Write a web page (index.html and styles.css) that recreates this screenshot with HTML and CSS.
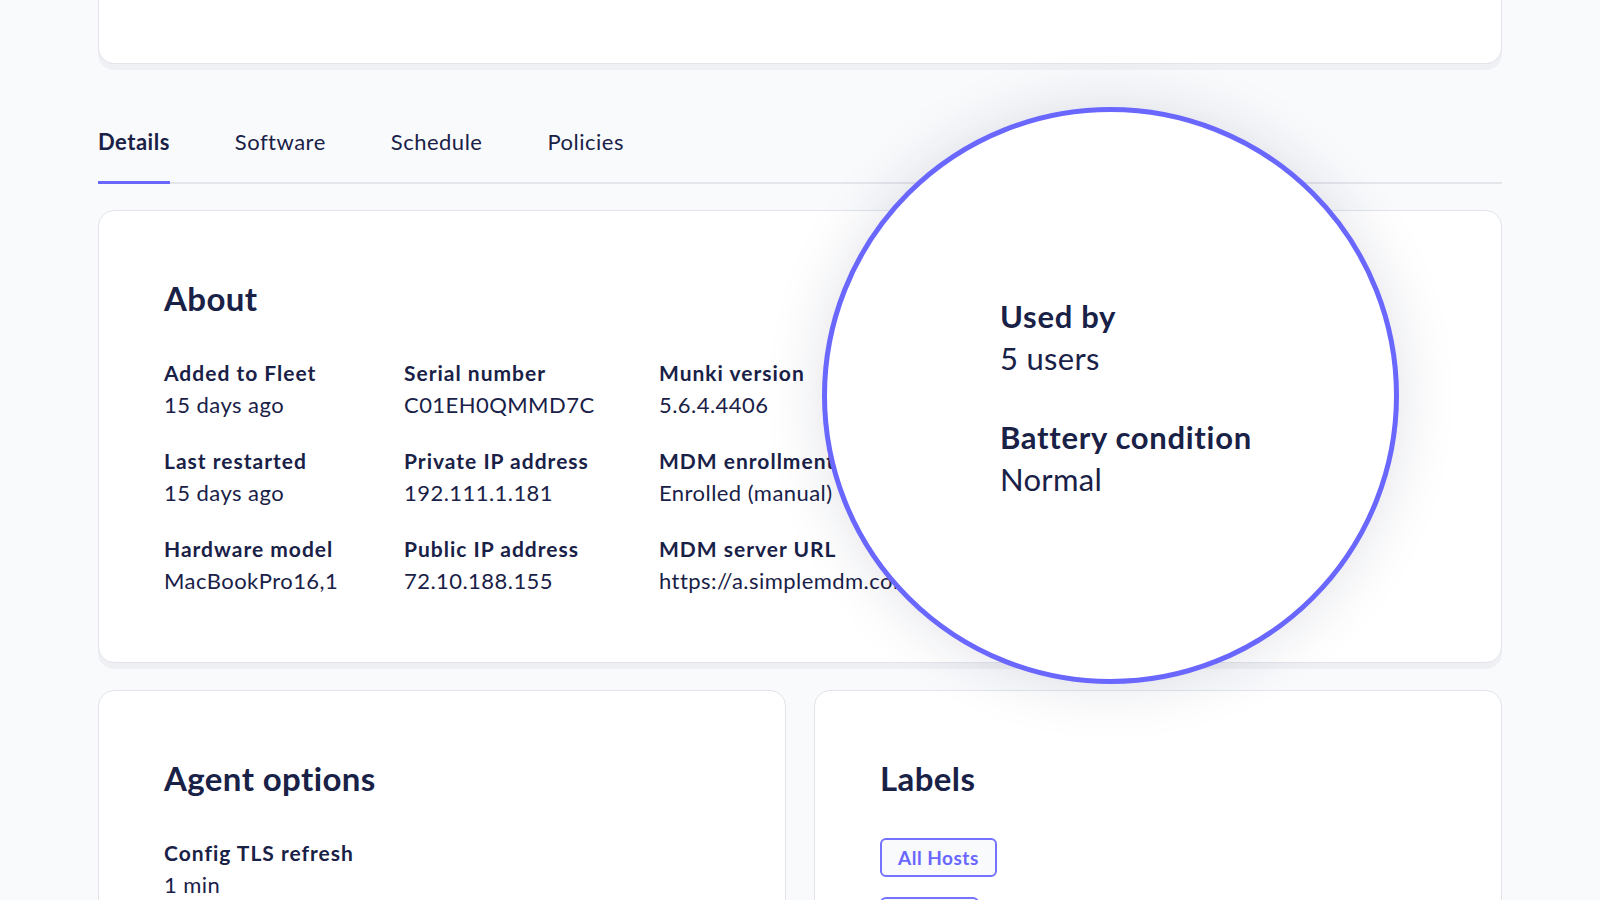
FILE: index.html
```html
<!DOCTYPE html>
<html lang="en">
<head>
<meta charset="utf-8">
<title>Host details</title>
<link rel="stylesheet" href="styles.css">
</head>
<body>
<div class="page">
  <div class="top-card"></div>

  <nav class="tabs">
    <a class="tab active">Details</a>
    <a class="tab">Software</a>
    <a class="tab">Schedule</a>
    <a class="tab">Policies</a>
  </nav>

  <section class="card about">
    <h2 class="card-title">About</h2>
    <div class="info-grid">
      <div class="info"><div class="label">Added to Fleet</div><div class="value">15 days ago</div></div>
      <div class="info"><div class="label">Serial number</div><div class="value">C01EH0QMMD7C</div></div>
      <div class="info"><div class="label">Munki version</div><div class="value">5.6.4.4406</div></div>

      <div class="info"><div class="label">Last restarted</div><div class="value">15 days ago</div></div>
      <div class="info"><div class="label">Private IP address</div><div class="value">192.111.1.181</div></div>
      <div class="info"><div class="label">MDM enrollment</div><div class="value">Enrolled (manual)</div></div>

      <div class="info"><div class="label">Hardware model</div><div class="value">MacBookPro16,1</div></div>
      <div class="info"><div class="label">Public IP address</div><div class="value">72.10.188.155</div></div>
      <div class="info"><div class="label">MDM server URL</div><div class="value">https://a.simplemdm.com</div></div>
    </div>
  </section>

  <div class="bottom-row">
    <section class="card">
      <h2 class="card-title">Agent options</h2>
      <div class="info"><div class="label">Config TLS refresh</div><div class="value">1 min</div></div>
    </section>
    <section class="card">
      <h2 class="card-title">Labels</h2>
      <div class="pills">
        <span class="pill">All Hosts</span>
        <span class="pill">macOS</span>
      </div>
    </section>
  </div>

  <div class="magnifier">
    <div class="mag-item">
      <div class="mag-label">Used by</div>
      <div class="mag-value">5 users</div>
    </div>
    <div class="mag-item">
      <div class="mag-label">Battery condition</div>
      <div class="mag-value">Normal</div>
    </div>
  </div>
</div>
</body>
</html>
```

FILE: styles.css
```css
* { box-sizing: border-box; }

html, body {
  margin: 0;
  padding: 0;
  background: #f9fafc;
  height: 900px;
  overflow: hidden;
}

body {
  font-family: "Lato", "Noto Sans", sans-serif;
  color: #192147;
}

.page {
  position: relative;
  width: 1404px;
  margin: 0 auto;
}

.top-card {
  height: 64px;
  background: #fff;
  border: 1px solid #e2e4ea;
  border-top: none;
  border-radius: 0 0 16px 16px;
  box-shadow: 0 6px 0 #eff0f4;
}

.tabs {
  display: flex;
  gap: 65px;
  margin-top: 63px;
  border-bottom: 2px solid #e4e6ec;
}

.tab {
  font-size: 22px;
  line-height: 30px;
  letter-spacing: 0.5px;
  padding-bottom: 24px;
  margin-bottom: -2px;
  border-bottom: 3px solid transparent;
  color: #192147;
}

.tab.active {
  font-weight: 700;
  border-bottom-color: #6a67fe;
}

.card {
  background: #fff;
  border: 1px solid #e2e4ea;
  border-radius: 16px;
  box-shadow: 0 6px 0 #eff0f4;
  padding: 67px 64px 67px 65px;
}

.about {
  margin-top: 26px;
  height: 453px;
}

.card-title {
  margin: 0 0 40px;
  font-size: 33px;
  line-height: 40px;
  letter-spacing: 0.4px;
  font-weight: 700;
}

.info-grid {
  display: grid;
  grid-template-columns: 240px 255px 1fr;
  row-gap: 26px;
}

.label {
  font-size: 21px;
  line-height: 30px;
  letter-spacing: 1px;
  font-weight: 700;
  white-space: nowrap;
}

.value {
  margin-top: 2px;
  font-size: 22px;
  line-height: 30px;
  letter-spacing: 0.45px;
  white-space: nowrap;
}

.bottom-row {
  display: grid;
  grid-template-columns: 1fr 1fr;
  gap: 28px;
  margin-top: 27px;
}

.bottom-row .card {
  height: 300px;
}

.pills {
  display: flex;
  flex-direction: column;
  align-items: flex-start;
  gap: 20px;
}

.pill {
  display: inline-block;
  height: 39px;
  padding: 0 16px;
  border: 2px solid #7572fe;
  border-radius: 6px;
  background: #f9fafc;
  color: #6a67fe;
  font-size: 19px;
  letter-spacing: 0.5px;
  font-weight: 700;
  line-height: 35px;
}

.magnifier {
  position: absolute;
  left: 724px;
  top: 107px;
  width: 577px;
  height: 577px;
  border-radius: 50%;
  border: 5px solid #6a67fe;
  background: #fff;
  box-shadow: 0 0 60px rgba(25, 33, 71, 0.13);
  padding: 183px 0 0 173px;
  display: flex;
  flex-direction: column;
  gap: 37px;
}

.mag-label {
  font-size: 31px;
  line-height: 42px;
  letter-spacing: 0.7px;
  font-weight: 700;
}

.mag-value {
  font-size: 31px;
  line-height: 42px;
  letter-spacing: 0.3px;
}
```
